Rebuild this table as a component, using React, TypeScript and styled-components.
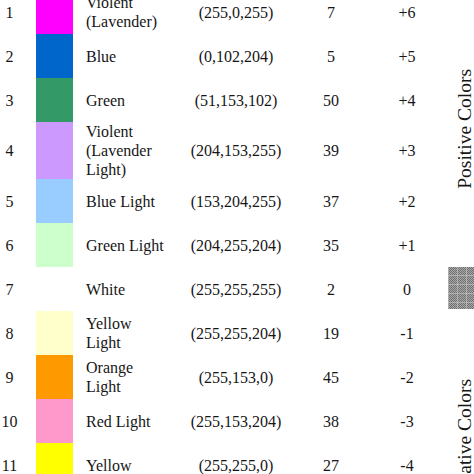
import React from "react";
import styled, { createGlobalStyle } from "styled-components";

const GlobalStyle = createGlobalStyle`
  html, body {
    margin: 0;
    padding: 0;
    background: #ffffff;
    overflow: hidden;
  }
  body {
    font-family: "Liberation Serif", "Times New Roman", serif;
    color: #161616;
  }
`;

type Row = {
  id: number;
  name: string[];
  rgb: [number, number, number];
  count: number;
  value: string;
};

const rows: Row[] = [
  { id: 1, name: ["Violent", "(Lavender)"], rgb: [255, 0, 255], count: 7, value: "+6" },
  { id: 2, name: ["Blue"], rgb: [0, 102, 204], count: 5, value: "+5" },
  { id: 3, name: ["Green"], rgb: [51, 153, 102], count: 50, value: "+4" },
  { id: 4, name: ["Violent", "(Lavender", "Light)"], rgb: [204, 153, 255], count: 39, value: "+3" },
  { id: 5, name: ["Blue Light"], rgb: [153, 204, 255], count: 37, value: "+2" },
  { id: 6, name: ["Green Light"], rgb: [204, 255, 204], count: 35, value: "+1" },
  { id: 7, name: ["White"], rgb: [255, 255, 255], count: 2, value: "0" },
  { id: 8, name: ["Yellow", "Light"], rgb: [255, 255, 204], count: 19, value: "-1" },
  { id: 9, name: ["Orange", "Light"], rgb: [255, 153, 0], count: 45, value: "-2" },
  { id: 10, name: ["Red Light"], rgb: [255, 153, 204], count: 38, value: "-3" },
  { id: 11, name: ["Yellow"], rgb: [255, 255, 0], count: 27, value: "-4" },
  { id: 12, name: ["Orange"], rgb: [255, 102, 0], count: 14, value: "-5" },
  { id: 13, name: ["Red"], rgb: [255, 0, 0], count: 21, value: "-6" },
];

const Page = styled.div`
  width: 474px;
  height: 474px;
  overflow: hidden;
`;

const Table = styled.div`
  display: grid;
  grid-template-columns: 19px 67px 82px 136px 54px 88px 38px;
  grid-auto-rows: minmax(44px, auto);
  margin-top: -10px;
  width: 484px;
  font-size: 16px;
  line-height: 19px;
`;

const Cell = styled.div<{ $align?: "left" | "center"; $padLeft?: number }>`
  display: flex;
  flex-direction: column;
  justify-content: center;
  align-items: ${(p) => (p.$align === "left" ? "flex-start" : "center")};
  padding-left: ${(p) => p.$padLeft ?? 0}px;
  white-space: nowrap;
`;

const SwatchCell = styled.div`
  display: flex;
  align-items: stretch;
  padding-left: 17px;
`;

const Swatch = styled.div<{ $color: string }>`
  width: 37px;
  background: ${(p) => p.$color};
`;

const GroupLabel = styled.div<{ $row: string }>`
  grid-column: 7;
  grid-row: ${(p) => p.$row};
  display: flex;
  align-items: center;
  justify-content: center;
`;

const RotatedText = styled.span`
  writing-mode: vertical-rl;
  transform: rotate(180deg);
  font-size: 19.5px;
  line-height: 20px;
  white-space: nowrap;
`;

const NeutralMark = styled.div`
  grid-column: 7;
  grid-row: 7;
  margin-left: 2px;
  margin-bottom: 2px;
  background-color: #8c8c8c;
  background-image:
    linear-gradient(90deg, rgba(200, 200, 200, 0.55) 1px, transparent 1px),
    linear-gradient(0deg, rgba(200, 200, 200, 0.55) 1px, transparent 1px),
    repeating-conic-gradient(#6f6f6f 0 25%, #a8a8a8 0 50%);
  background-size: 9px 9px, 9px 9px, 2px 2px;
`;

export default function App() {
  return (
    <Page>
      <GlobalStyle />
      <Table>
        <GroupLabel $row="1 / span 6">
          <RotatedText>Positive Colors</RotatedText>
        </GroupLabel>
        <NeutralMark />
        <GroupLabel $row="8 / span 6">
          <RotatedText>Negative Colors</RotatedText>
        </GroupLabel>
        {rows.map((r) => (
          <React.Fragment key={r.id}>
            <Cell>{r.id}</Cell>
            <SwatchCell>
              <Swatch $color={`rgb(${r.rgb.join(",")})`} />
            </SwatchCell>
            <Cell $align="left">
              {r.name.map((line) => (
                <span key={line}>{line}</span>
              ))}
            </Cell>
            <Cell>({r.rgb.join(",")})</Cell>
            <Cell>{r.count}</Cell>
            <Cell $padLeft={10}>{r.value}</Cell>
          </React.Fragment>
        ))}
      </Table>
    </Page>
  );
}
